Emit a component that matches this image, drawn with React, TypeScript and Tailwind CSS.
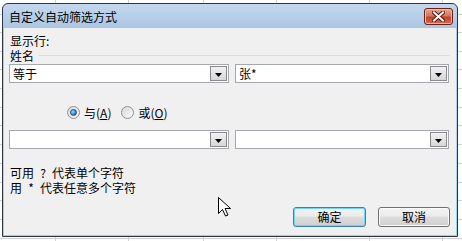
import React from "react";

const COLS = [55, 128, 203, 276, 369, 442];
const ROWS = [14, 32, 51, 69, 88, 107, 125, 144, 163, 182, 200, 219, 238];

function SheetGrid() {
  return (
    <svg className="absolute inset-0" width="462" height="241">
      {COLS.map((x) => (
        <line key={`c${x}`} x1={x + 0.5} y1="0" x2={x + 0.5} y2="241" stroke="#d0d0d0" />
      ))}
      {ROWS.map((y) => (
        <line key={`r${y}`} x1="0" y1={y + 0.5} x2="462" y2={y + 0.5} stroke="#d0d0d0" />
      ))}
    </svg>
  );
}

function DropButton() {
  return (
    <div className="m-[1px] flex w-[17px] items-center justify-center border border-[#8a8a8a] bg-gradient-to-b from-[#f2f2f2] to-[#d6d6d6] pt-[2px]">
      <svg width="7" height="4" viewBox="0 0 7 4">
        <path d="M0 0H7L3.5 4Z" fill="#000" />
      </svg>
    </div>
  );
}

function Combo({ value, width }: { value?: string; width: string }) {
  return (
    <div className={`flex h-[19px] border border-[#a5a9ad] bg-white ${width}`}>
      <div className="flex-1 pl-[3px] text-[12px] leading-[17px]">{value}</div>
      <DropButton />
    </div>
  );
}

function Radio({ checked, label, hotkey }: { checked?: boolean; label: string; hotkey: string }) {
  return (
    <div className="flex items-center gap-[4px]">
      <div className="flex h-[13px] w-[13px] items-center justify-center rounded-full border border-[#8f9091] bg-gradient-to-br from-[#d8d8d8] to-[#fafafa]">
        {checked && (
          <div className="h-[7px] w-[7px] rounded-full border border-[#1c5180] bg-[radial-gradient(circle_at_35%_35%,#9fdcff,#2f8bd8_55%,#1a5d9c)]" />
        )}
      </div>
      <span className="leading-[15px]">
        {label}(<span className="underline">{hotkey}</span>)
      </span>
    </div>
  );
}

function WinButton({ label, primary }: { label: string; primary?: boolean }) {
  return (
    <div
      className={`flex h-[20px] items-center justify-center rounded-[3px] border bg-[linear-gradient(#f3f3f3,#ebebeb_45%,#dddddd_50%,#cfcfcf)] text-[12px] ${
        primary
          ? "w-[73px] border-[#3c7fb1] shadow-[inset_0_0_0_1px_#6fd6f8]"
          : "w-[72px] border-[#707070] shadow-[inset_0_0_0_1px_#fbfbfb]"
      }`}
    >
      {label}
    </div>
  );
}

function Dialog() {
  return (
    <div className="absolute left-[2px] top-[3px] flex h-[234px] w-[456px] flex-col overflow-hidden rounded-t-[6px] border border-[#2a3644] bg-[linear-gradient(#c4d8ee,#aac5e3_24px,#b6d2ee_60%,#8fd6f4)]">
      {/* title bar */}
      <div className="flex h-[24px] items-start justify-between">
        <span className="pl-[6px] pt-[5px] leading-[15px] text-black">自定义自动筛选方式</span>
        <div className="mr-[4px] mt-[4px] flex h-[17px] w-[29px] items-center justify-center rounded-[3px] border border-[#6b2217] bg-[linear-gradient(#e8a596,#d7775f_45%,#c2442a_55%,#d86a4d)] shadow-[inset_0_0_0_1px_#f0b8aa]">
          <svg width="13" height="11" viewBox="0 0 13 11">
            <path
              d="M2 1.5L6.5 5.5L11 1.5M2 9.5L6.5 5.5L11 9.5"
              stroke="#5a1d14"
              strokeWidth="4"
              fill="none"
              strokeLinecap="square"
            />
            <path
              d="M2 1.5L6.5 5.5L11 1.5M2 9.5L6.5 5.5L11 9.5"
              stroke="#ffffff"
              strokeWidth="2"
              fill="none"
              strokeLinecap="square"
            />
          </svg>
        </div>
      </div>

      {/* body */}
      <div className="mx-[1px] mb-[1px] flex flex-1 flex-col bg-[#f0f0f0] pl-[5px] pr-[6px] pt-[6px]">
        <div className="h-[14px] pl-[1px] leading-[14px]">显示行:</div>
        <div className="flex h-[15px] items-center gap-[5px] pl-[1px]">
          <span className="leading-[15px]">姓名</span>
          <div className="mt-[-1px] h-px flex-1 bg-[#d5dfe5]" />
        </div>

        <div className="mt-[1px] flex gap-[6px]">
          <Combo value="等于" width="w-[220px]" />
          <Combo value="张*" width="w-[214px]" />
        </div>

        <div className="mt-[22px] flex h-[15px] items-center gap-[10px] pl-[58px]">
          <Radio checked label="与" hotkey="A" />
          <Radio label="或" hotkey="O" />
        </div>

        <div className="mt-[10px] flex gap-[6px]">
          <Combo width="w-[220px]" />
          <Combo width="w-[214px]" />
        </div>

        <div className="mt-[16px] flex h-[15px] items-center pl-[1px] leading-[15px]">
          可用<span className="inline-block w-[18px] text-center">?</span>代表单个字符
        </div>
        <div className="flex h-[15px] items-center pl-[1px] leading-[15px]">
          用<span className="inline-block w-[18px] text-center">*</span>代表任意多个字符
        </div>

        <div className="mt-[12px] flex justify-end gap-[12px]">
          <WinButton label="确定" primary />
          <WinButton label="取消" />
        </div>
      </div>
    </div>
  );
}

function Cursor() {
  return (
    <svg className="absolute left-[218px] top-[197px]" width="13" height="20" viewBox="0 0 13 20">
      <path
        d="M0.5 0.5V16.5L4.5 12.5L7.5 19L10 18L7 11.5H12.5Z"
        fill="#ffffff"
        stroke="#000000"
        strokeWidth="1"
        strokeLinejoin="miter"
      />
    </svg>
  );
}

export default function App() {
  return (
    <div className="relative h-[241px] w-[462px] overflow-hidden bg-white font-['Noto_Sans_CJK_SC','Noto_Sans',sans-serif] text-[12px] text-black">
      <SheetGrid />
      <Dialog />
      <Cursor />
    </div>
  );
}
